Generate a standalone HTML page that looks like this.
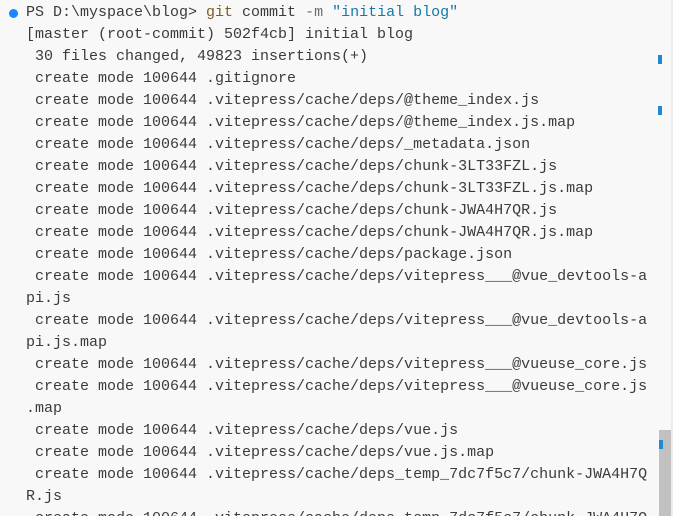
<!DOCTYPE html>
<html><head><meta charset="utf-8"><style>
html,body{margin:0;padding:0;width:673px;height:516px;overflow:hidden;}
body{background:#f8f8f8;position:relative;}
pre{margin:0;position:absolute;left:26px;top:2px;font-family:"Liberation Mono",monospace;font-size:15px;line-height:22px;color:#3b3b3b;white-space:pre;}
.y{color:#795e26}.g{color:#6e6e6e}.s{color:#1279a8}
.dot{position:absolute;left:9px;top:9px;width:9px;height:9px;border-radius:50%;background:#1a85ff;}
.m{position:absolute;left:658px;width:4px;height:9px;background:#1f8ad2;}
.sb{position:absolute;left:659px;top:430px;width:12px;height:86px;background:#c1c1c1;}
.edge{position:absolute;left:671px;top:0;width:2px;height:516px;background:#ececec;}
</style></head><body>
<div class="dot"></div>
<pre>PS D:\myspace\blog&gt; <span class="y">git</span> commit <span class="g">-m</span> <span class="s">"initial blog"</span>
[master (root-commit) 502f4cb] initial blog
 30 files changed, 49823 insertions(+)
 create mode 100644 .gitignore
 create mode 100644 .vitepress/cache/deps/@theme_index.js
 create mode 100644 .vitepress/cache/deps/@theme_index.js.map
 create mode 100644 .vitepress/cache/deps/_metadata.json
 create mode 100644 .vitepress/cache/deps/chunk-3LT33FZL.js
 create mode 100644 .vitepress/cache/deps/chunk-3LT33FZL.js.map
 create mode 100644 .vitepress/cache/deps/chunk-JWA4H7QR.js
 create mode 100644 .vitepress/cache/deps/chunk-JWA4H7QR.js.map
 create mode 100644 .vitepress/cache/deps/package.json
 create mode 100644 .vitepress/cache/deps/vitepress___@vue_devtools-a
pi.js
 create mode 100644 .vitepress/cache/deps/vitepress___@vue_devtools-a
pi.js.map
 create mode 100644 .vitepress/cache/deps/vitepress___@vueuse_core.js
 create mode 100644 .vitepress/cache/deps/vitepress___@vueuse_core.js
.map
 create mode 100644 .vitepress/cache/deps/vue.js
 create mode 100644 .vitepress/cache/deps/vue.js.map
 create mode 100644 .vitepress/cache/deps_temp_7dc7f5c7/chunk-JWA4H7Q
R.js
 create mode 100644 .vitepress/cache/deps_temp_7dc7f5c7/chunk-JWA4H7Q</pre>
<div class="m" style="top:55px"></div>
<div class="m" style="top:106px"></div>
<div class="edge"></div>
<div class="sb"></div>
<div class="m" style="top:440px;left:659px"></div>
</body></html>
